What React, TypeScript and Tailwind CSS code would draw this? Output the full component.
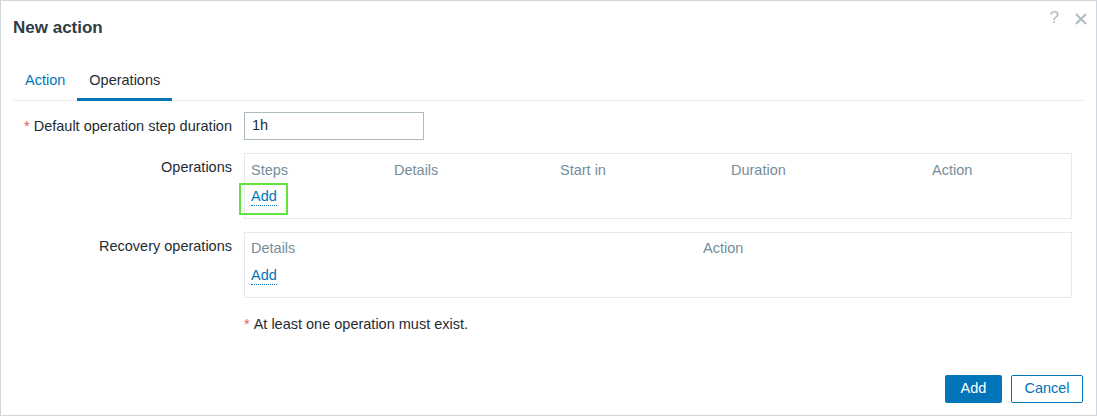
import React from "react";

const FONT = { fontFamily: '"Liberation Sans", Arial, sans-serif' };

function AddLink({ highlight }: { highlight?: boolean }) {
  return (
    <span className="relative inline-block">
      <span className="inline-block text-[14.5px] leading-[18px] text-[#0275b8] border-b border-dotted border-[#0275b8]">
        Add
      </span>
      {highlight && (
        <span className="absolute -left-[12px] -right-[11px] -top-[3px] -bottom-[7px] border-2 border-[#5fe53c] pointer-events-none" />
      )}
    </span>
  );
}

export default function App() {
  return (
    <div
      style={FONT}
      className="w-[1097px] h-[416px] bg-white border border-[#cfd7dc] flex flex-col text-[#1f2c33] text-[14.5px] overflow-hidden"
    >
      {/* Header */}
      <div className="flex justify-between pl-[12px] pr-[9px] h-[53px]">
        <div className="flex items-center text-[17px] font-bold text-[#2f3d47]">New action</div>
        <div className="flex items-start gap-[16px] pt-[8px]">
          <span className="text-[17px] leading-[18px] text-[#acbbc2]">?</span>
          <svg width="12" height="12" viewBox="0 0 12 12" className="mt-[4px]">
            <path d="M1 1 L11 11 M11 1 L1 11" stroke="#acbbc2" strokeWidth="2" />
          </svg>
        </div>
      </div>

      {/* Tabs */}
      <div className="mx-[12px] mt-[10px] border-b border-[#ebeef0] flex h-[37px]">
        <div className="px-[12px] flex items-center pb-[3px] text-[#0275b8]">Action</div>
        <div className="px-[12px] flex items-center border-b-[3px] border-[#0275b8] -mb-px text-[#1f2c33]">
          Operations
        </div>
      </div>

      {/* Form */}
      <div className="pl-[12px] pt-[11px] grid grid-cols-[219px_1fr] gap-x-[12px] gap-y-[13px] pr-[24px]">
        {/* Row 1 */}
        <div className="flex items-center justify-end h-[28px] leading-[18px]">
          <span className="text-[#e45959] mr-[4px]">*</span>
          <span>Default operation step duration</span>
        </div>
        <div>
          <div className="w-[180px] h-[28px] border border-[#acbbc2] px-[7px] flex items-center">1h</div>
        </div>

        {/* Row 2 */}
        <div className="text-right pt-[5px] leading-[18px]">Operations</div>
        <div className="border border-[#e5e9eb] pt-[7px] pb-[14px] pl-[6px]">
          <div className="grid grid-cols-[143px_166px_171px_201px_1fr] text-[#768d99] leading-[18px]">
            <span>Steps</span>
            <span>Details</span>
            <span>Start in</span>
            <span>Duration</span>
            <span>Action</span>
          </div>
          <div className="mt-[7px] h-[18px]">
            <AddLink highlight />
          </div>
        </div>

        {/* Row 3 */}
        <div className="text-right pt-[5px] leading-[18px]">Recovery operations</div>
        <div className="border border-[#e5e9eb] pt-[6px] pb-[14px] pl-[6px]">
          <div className="grid grid-cols-[452px_1fr] text-[#768d99] leading-[18px]">
            <span>Details</span>
            <span>Action</span>
          </div>
          <div className="mt-[8px] h-[18px]">
            <AddLink />
          </div>
        </div>

        {/* Note */}
        <div />
        <div className="pt-[4px] leading-[18px] flex">
          <span className="text-[#e45959] mr-[4px]">*</span>
          <span>At least one operation must exist.</span>
        </div>
      </div>

      {/* Footer */}
      <div className="mt-auto flex justify-end gap-[9px] px-[13px] pb-[12px]">
        <button className="w-[57px] h-[28px] rounded-[2px] bg-[#0275b8] text-white">Add</button>
        <button className="w-[72px] h-[28px] rounded-[2px] border border-[#0275b8] bg-white text-[#0275b8]">
          Cancel
        </button>
      </div>
    </div>
  );
}
